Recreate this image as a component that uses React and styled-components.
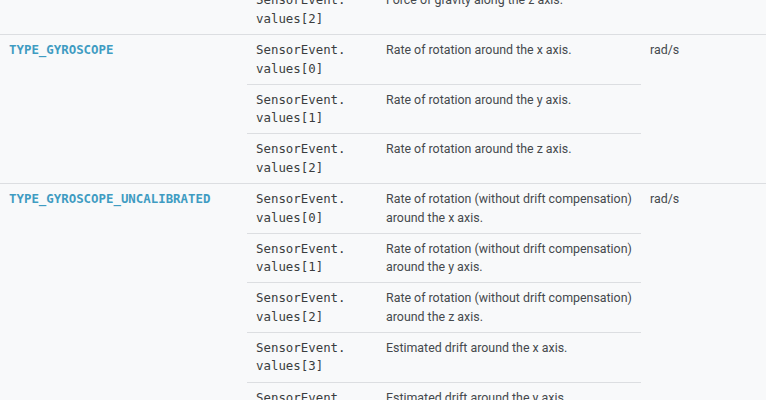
import React from "react";
import styled, { createGlobalStyle } from "styled-components";

const GlobalStyle = createGlobalStyle`
  html, body {
    margin: 0;
    padding: 0;
    background: #ffffff;
    overflow: hidden;
  }
  body {
    font-family: Roboto, "Noto Sans", sans-serif;
  }
`;

const groups = [
  {
    name: "",
    unit: "",
    rows: [{ index: 2, text: "Force of gravity along the z axis." }],
  },
  {
    name: "TYPE_GYROSCOPE",
    unit: "rad/s",
    rows: [
      { index: 0, text: "Rate of rotation around the x axis." },
      { index: 1, text: "Rate of rotation around the y axis." },
      { index: 2, text: "Rate of rotation around the z axis." },
    ],
  },
  {
    name: "TYPE_GYROSCOPE_UNCALIBRATED",
    unit: "rad/s",
    rows: [
      { index: 0, text: "Rate of rotation (without drift compensation) around the x axis." },
      { index: 1, text: "Rate of rotation (without drift compensation) around the y axis." },
      { index: 2, text: "Rate of rotation (without drift compensation) around the z axis." },
      { index: 3, text: "Estimated drift around the x axis." },
      { index: 4, text: "Estimated drift around the y axis." },
    ],
  },
];

function App() {
  return (
    <>
      <GlobalStyle />
      <Page>
        <Table>
          <colgroup>
            <col style={{ width: 247 }} />
            <col style={{ width: 130 }} />
            <col style={{ width: 264 }} />
            <col style={{ width: 125 }} />
          </colgroup>
          {groups.map((group, g) => (
            <tbody key={g}>
              {group.rows.map((row, i) => (
                <Row key={i}>
                  {i === 0 && (
                    <Cell rowSpan={group.rows.length} $first={g === 0}>
                      <SensorName>{group.name}</SensorName>
                    </Cell>
                  )}
                  <Cell $first={g === 0}>
                    <Code>
                      SensorEvent.
                      <br />
                      values[{row.index}]
                    </Code>
                  </Cell>
                  <Cell $first={g === 0}>{row.text}</Cell>
                  {i === 0 && (
                    <Cell rowSpan={group.rows.length} $first={g === 0}>
                      {group.unit}
                    </Cell>
                  )}
                </Row>
              ))}
            </tbody>
          ))}
        </Table>
      </Page>
    </>
  );
}

export default App;

const Page = styled.div`
  width: 770px;
  height: 400px;
  overflow: hidden;
  background: #ffffff;
`;

const Table = styled.table`
  width: 766px;
  margin-top: -15px;
  border-collapse: collapse;
  table-layout: fixed;
  background: #f8f9fa;
`;

const Row = styled.tr`
  height: 49.65px;
`;

const Cell = styled.td`
  vertical-align: top;
  padding: 6px 3px 0 9px;
  border-top: ${(p) => (p.$first ? "none" : "1px solid #dcdee1")};
  font-size: 12.4px;
  line-height: 18.5px;
  color: #45494d;
`;

const Code = styled.code`
  font-family: "DejaVu Sans Mono", "Liberation Mono", monospace;
  font-size: 12.4px;
  color: #3a3d40;
`;

const SensorName = styled(Code)`
  color: #3f9cc2;
  font-weight: bold;
`;
